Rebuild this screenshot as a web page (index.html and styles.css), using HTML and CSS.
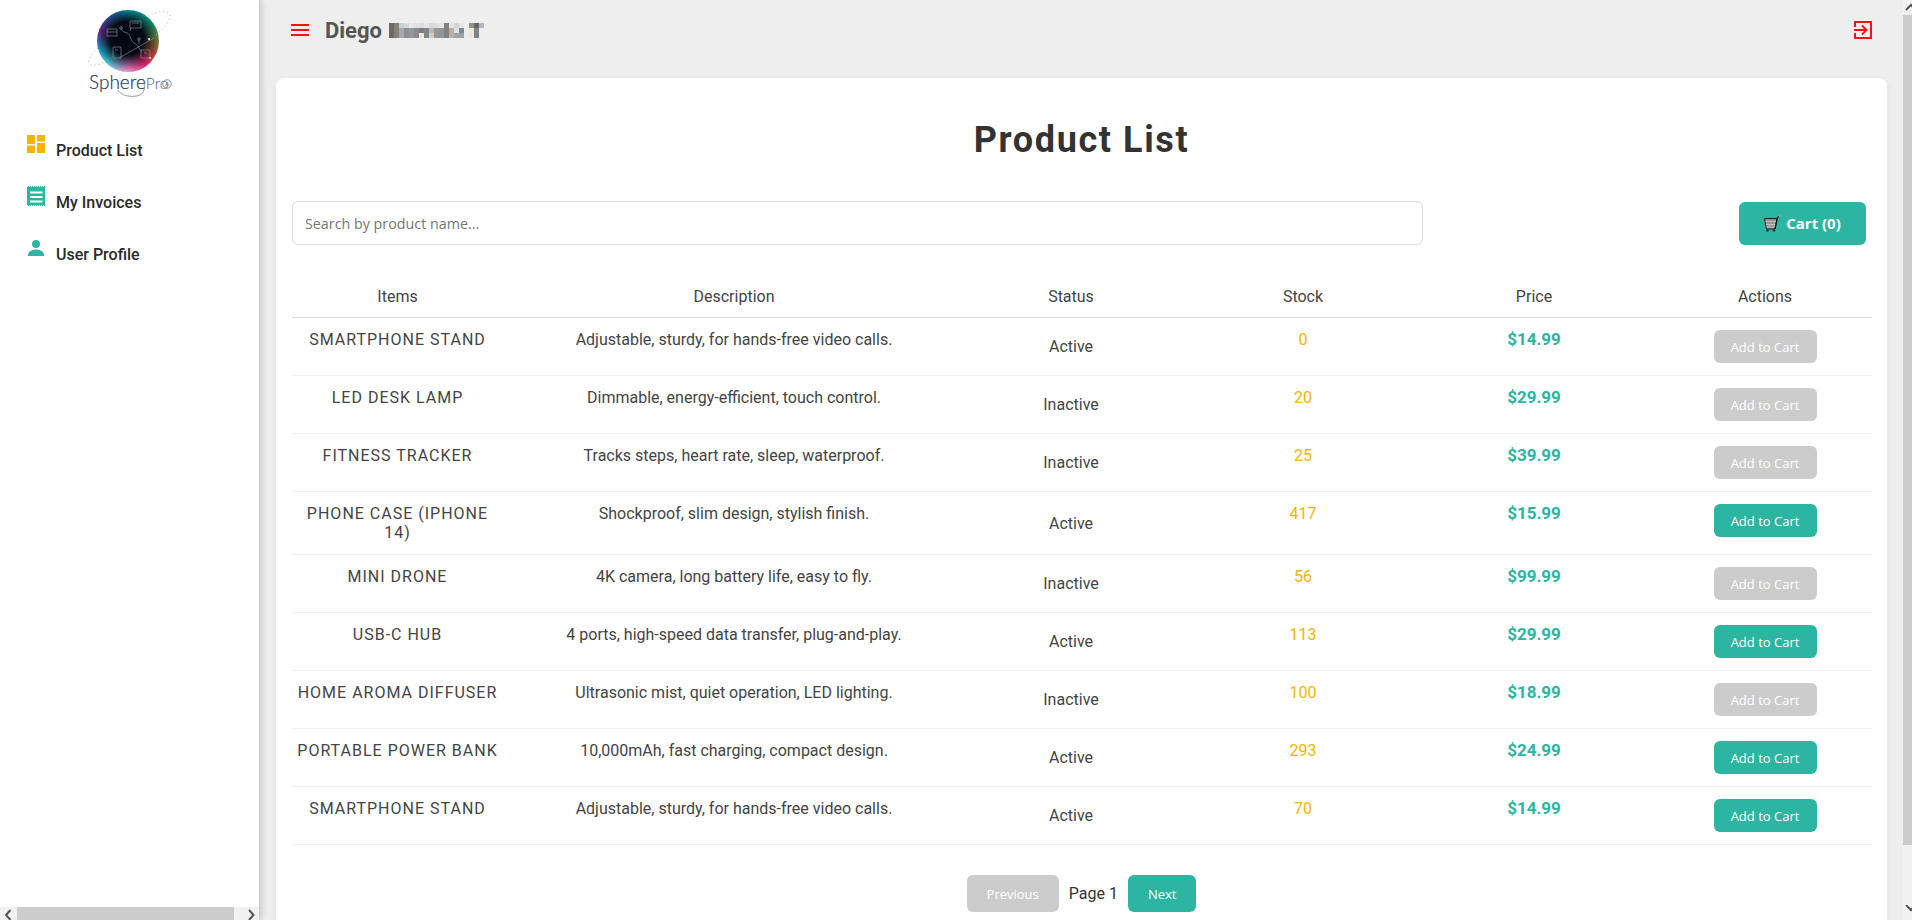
FILE: index.html
```html
<!DOCTYPE html>
<html lang="en">

<head>
  <meta charset="UTF-8">
  <meta name="viewport" content="width=device-width, initial-scale=1.0">
  <title>SpherePro - Product List</title>
  <link rel="stylesheet" href="styles.css">
</head>

<body>

  <div class="app">
    <aside class="sidebar">
      <div class="sidebar-content">
        <svg class="logo" width="120" height="105" viewBox="0 0 120 105">
          <foreignObject x="27" y="10" width="62" height="62">
            <div class="logo-orb"></div>
          </foreignObject>
          <g fill="none" stroke="#8d9aa8" stroke-width="0.6">
            <path d="M37 29h10v7H37zM37 32h10M60 21h11v7H60zM62 23h7M43 47h8v11h-8zM45 50h3" />
            <path d="M51 28.500c2 5 6 3 8 6s1 6 6 9 3 6 7 8M69 39v5M49 58l35-20M61 28l-1 3" />
            <path d="M71 50h9v8h-9zM74 53h3" />
            <circle cx="51" cy="28" r="1.300" />
            <circle cx="69" cy="39" r="1.300" />
          </g>
          <circle cx="79" cy="39" r="1" fill="#fff" />
          <circle cx="80" cy="58" r="1" fill="#ddd" />
          <g fill="none" stroke="#b0b0b0" stroke-width="1" stroke-dasharray="1 3">
            <path d="M78 16c8-5 20-6 22-1 1 5-6 13-14 20" />
            <path d="M28 48c-7 6-11 13-8 16s11 0 16-3" />
          </g>
          <text class="logo-text" x="19" y="89">Sphere<tspan class="logo-pro">Pro</tspan></text>
          <circle cx="97" cy="84" r="4.200" fill="none" stroke="#5e7184" stroke-width="0.8" />
          <text class="logo-mark" x="97" y="86">A</text>
          <path d="M48 90c4 8 24 9 26 0 1-3 0-6 0-8" fill="none" stroke="#6f8090" stroke-width="0.8" />
        </svg>

        <nav class="menu">
          <a class="menu-item" href="#">
            <svg class="menu-icon" width="18" height="18" viewBox="0 0 18 18">
              <path fill="#f5b400" d="M0 0h8v9H0zM0 10.500h8V18H0zM10 0h8v6.500h-8zM10 8h8v10h-8z" />
            </svg>
            <span class="menu-label">Product List</span>
          </a>
          <a class="menu-item" href="#">
            <svg class="menu-icon menu-icon-invoice" width="18" height="20" viewBox="0 0 18 20">
              <path fill="#2cb5a0" d="M0 0h18v20H0z" />
              <path fill="#fff" d="M3 5.500h12.500v2H3zM3 10h12.500v2H3zM3 14.500h12.500v2H3z" />
              <path stroke="#fff" stroke-width="1" stroke-dasharray="1 1" d="M0 .5h18M0 19.500h18" />
            </svg>
            <span class="menu-label">My Invoices</span>
          </a>
          <a class="menu-item" href="#">
            <svg class="menu-icon menu-icon-user" width="18" height="16" viewBox="0 0 18 16">
              <circle cx="9" cy="4" r="4" fill="#2cb5a0" />
              <path fill="#2cb5a0" d="M1 16c0-1 0-2 .5-3 1-2 4-3.500 7.500-3.500s6.500 1.500 7.500 3.500c.5 1 .5 2 .5 3z" />
            </svg>
            <span class="menu-label">User Profile</span>
          </a>
        </nav>
      </div>

      <div class="hbar">
        <svg width="17" height="13" viewBox="0 0 17 13">
          <path d="M10.500 3L6 8l4.500 5" fill="none" stroke="#555" stroke-width="2" />
        </svg>
        <div class="hbar-thumb"></div>
        <svg width="25" height="13" viewBox="0 0 25 13">
          <path d="M15 3l4.500 5-4.500 5" fill="none" stroke="#555" stroke-width="2" />
        </svg>
      </div>
    </aside>

    <main class="main">
      <header class="topbar">
        <div class="topbar-left">
          <svg class="hamburger" width="18" height="12" viewBox="0 0 18 12">
            <path fill="#f01414" d="M0 0h18v2H0zM0 5h18v2H0zM0 10h18v2H0z" />
          </svg>
          <span class="user-name">Diego</span>
          <!-- blurred surname -->
          <svg class="mosaic" width="95" height="15" viewBox="0 0 19 3" shape-rendering="crispEdges">
            <rect x="0" y="0" width="1" height="3" fill="#6d6863" />
            <rect x="1" y="0" width="1" height="3" fill="#85817c" />
            <rect x="2" y="0" width="1" height="1" fill="#c9ced2" />
            <rect x="3" y="0" width="1" height="1" fill="#d6d8da" />
            <rect x="4" y="0" width="1" height="1" fill="#e6e6e6" />
            <rect x="5" y="0" width="1" height="1" fill="#e2e2e2" />
            <rect x="6" y="0" width="1" height="1" fill="#dcdcdc" />
            <rect x="7" y="0" width="1" height="1" fill="#e4e4e4" />
            <rect x="8" y="0" width="1" height="1" fill="#d8d8d4" />
            <rect x="9" y="0" width="1" height="1" fill="#dcdcdc" />
            <rect x="10" y="0" width="1" height="1" fill="#e6e6e6" />
            <rect x="11" y="0" width="1" height="3" fill="#85817c" />
            <rect x="12" y="0" width="1" height="1" fill="#e0e2e4" />
            <rect x="13" y="0" width="1" height="1" fill="#d2d4d6" />
            <rect x="14" y="0" width="1" height="1" fill="#e4e6e8" />
            <rect x="2" y="1" width="1" height="2" fill="#a8a9a8" />
            <rect x="3" y="1" width="1" height="2" fill="#8a9094" />
            <rect x="4" y="1" width="1" height="2" fill="#93979b" />
            <rect x="5" y="1" width="1" height="2" fill="#8d8b88" />
            <rect x="6" y="1" width="1" height="1" fill="#7c7c7c" />
            <rect x="6" y="2" width="1" height="1" fill="#efe6dc" />
            <rect x="7" y="1" width="1" height="2" fill="#7e8790" />
            <rect x="8" y="1" width="1" height="1" fill="#bdb5ad" />
            <rect x="8" y="2" width="1" height="1" fill="#d4ccc4" />
            <rect x="9" y="1" width="1" height="2" fill="#979898" />
            <rect x="10" y="1" width="1" height="2" fill="#8f959d" />
            <rect x="12" y="1" width="1" height="2" fill="#b6aea7" />
            <rect x="13" y="1" width="1" height="1" fill="#e0e2e4" />
            <rect x="13" y="2" width="1" height="1" fill="#a0a4a8" />
            <rect x="14" y="1" width="1" height="1" fill="#808890" />
            <rect x="14" y="2" width="1" height="1" fill="#9ca2a8" />
            <rect x="16" y="0" width="1" height="1" fill="#9a908a" />
            <rect x="17" y="0" width="1" height="1" fill="#62666c" />
            <rect x="18" y="0" width="1" height="1" fill="#b4b8bc" />
            <rect x="16" y="1" width="1" height="2" fill="#f1e5db" />
            <rect x="17" y="1" width="1" height="2" fill="#7c848c" />
          </svg>
        </div>
        <svg class="logout" width="18" height="18" viewBox="0 0 18 18">
          <path fill="none" stroke="#f01414" stroke-width="2" d="M1 6V1h16v16H1v-5" />
          <path fill="none" stroke="#f01414" stroke-width="2" d="M0 9h12M8 4.500L12.500 9 8 13.500" />
        </svg>
      </header>

      <section class="card">
        <h1 class="page-title">Product List</h1>

        <div class="toolbar">
          <input class="search" type="text" placeholder="Search by product name...">
          <button class="cart-btn">
            <svg width="17" height="17" viewBox="0 0 17 17">
              <path fill="#949494" stroke="#1c1c1c" stroke-width="1" d="M.5 3.500H13l-2 10.500H2.500z" />
              <path fill="none" stroke="#c4c4c4" stroke-width="1" d="M1.500 6.500h10.500M2 9.500h9.500M2.500 12h8.500" />
              <path fill="none" stroke="#1c1c1c" stroke-width="1.200" d="M11 14l2.500-11.500 1.500-1" />
              <path fill="none" stroke="#e58a80" stroke-width="1.200" d="M15 1.500L16.500.5" />
              <circle cx="3.500" cy="15.500" r="1.300" fill="#333" />
              <circle cx="10" cy="15.500" r="1.300" fill="#333" />
            </svg>
            Cart (0)
          </button>
        </div>

        <table class="products">
          <colgroup>
            <col class="col-items">
            <col class="col-desc">
            <col class="col-status">
            <col class="col-stock">
            <col class="col-price">
            <col class="col-actions">
          </colgroup>
          <thead>
            <tr>
              <th>Items</th>
              <th>Description</th>
              <th>Status</th>
              <th>Stock</th>
              <th>Price</th>
              <th>Actions</th>
            </tr>
          </thead>
          <tbody>
            <tr>
              <td class="name">Smartphone Stand</td>
              <td>Adjustable, sturdy, for hands-free video calls.</td>
              <td class="status">Active</td>
              <td class="stock">0</td>
              <td class="price">$14.99</td>
              <td><button class="btn" disabled>Add to Cart</button></td>
            </tr>
            <tr>
              <td class="name">LED Desk Lamp</td>
              <td>Dimmable, energy-efficient, touch control.</td>
              <td class="status">Inactive</td>
              <td class="stock">20</td>
              <td class="price">$29.99</td>
              <td><button class="btn" disabled>Add to Cart</button></td>
            </tr>
            <tr>
              <td class="name">Fitness Tracker</td>
              <td>Tracks steps, heart rate, sleep, waterproof.</td>
              <td class="status">Inactive</td>
              <td class="stock">25</td>
              <td class="price">$39.99</td>
              <td><button class="btn" disabled>Add to Cart</button></td>
            </tr>
            <tr>
              <td class="name">Phone Case (iPhone 14)</td>
              <td>Shockproof, slim design, stylish finish.</td>
              <td class="status">Active</td>
              <td class="stock">417</td>
              <td class="price">$15.99</td>
              <td><button class="btn">Add to Cart</button></td>
            </tr>
            <tr>
              <td class="name">Mini Drone</td>
              <td>4K camera, long battery life, easy to fly.</td>
              <td class="status">Inactive</td>
              <td class="stock">56</td>
              <td class="price">$99.99</td>
              <td><button class="btn" disabled>Add to Cart</button></td>
            </tr>
            <tr>
              <td class="name">USB-C Hub</td>
              <td>4 ports, high-speed data transfer, plug-and-play.</td>
              <td class="status">Active</td>
              <td class="stock">113</td>
              <td class="price">$29.99</td>
              <td><button class="btn">Add to Cart</button></td>
            </tr>
            <tr>
              <td class="name">Home Aroma Diffuser</td>
              <td>Ultrasonic mist, quiet operation, LED lighting.</td>
              <td class="status">Inactive</td>
              <td class="stock">100</td>
              <td class="price">$18.99</td>
              <td><button class="btn" disabled>Add to Cart</button></td>
            </tr>
            <tr>
              <td class="name">Portable Power Bank</td>
              <td>10,000mAh, fast charging, compact design.</td>
              <td class="status">Active</td>
              <td class="stock">293</td>
              <td class="price">$24.99</td>
              <td><button class="btn">Add to Cart</button></td>
            </tr>
            <tr>
              <td class="name">Smartphone Stand</td>
              <td>Adjustable, sturdy, for hands-free video calls.</td>
              <td class="status">Active</td>
              <td class="stock">70</td>
              <td class="price">$14.99</td>
              <td><button class="btn">Add to Cart</button></td>
            </tr>
          </tbody>
        </table>

        <div class="pagination">
          <button class="btn page-btn" disabled>Previous</button>
          <span class="page-label">Page 1</span>
          <button class="btn page-btn">Next</button>
        </div>
      </section>
    </main>

    <div class="vbar">
      <svg class="vbar-arrow" width="9" height="15" viewBox="0 0 9 15">
        <path d="M3 10l5-5 5 5" fill="none" stroke="#555" stroke-width="2" />
      </svg>
      <div class="vbar-thumb"></div>
      <svg class="vbar-arrow vbar-arrow-end" width="9" height="15" viewBox="0 0 9 15">
        <path d="M3 0l5 5 5-5" fill="none" stroke="#555" stroke-width="2" />
      </svg>
    </div>
  </div>

</body>

</html>
```

FILE: styles.css
```css
* {
  box-sizing: border-box;
}

body {
  font-family: Roboto, sans-serif;
  margin: 0;
  background-color: #eee;
  color: #444;
  overflow: hidden;
}

.app {
  display: flex;
  height: 920px;
}

/* Sidebar */
.sidebar {
  flex: 0 0 260px;
  display: flex;
  flex-direction: column;
  background-color: #fff;
  border-right: 1px solid #ccc;
  box-shadow: 2px 0 6px rgba(0, 0, 0, 0.15);
  z-index: 1;
}

.sidebar-content {
  flex: 1;
}

.logo {
  display: block;
  margin-left: 70px;
}

.logo-orb {
  width: 62px;
  height: 62px;
  border-radius: 50%;
  background:
    radial-gradient(circle at 48% 46%, #04070f 0, #060a14 36%, rgba(6, 10, 20, 0) 70%),
    conic-gradient(#0ab0c0 0deg, #0fa57c 50deg, #6f8a3a 85deg, #c0452f 115deg, #e0246e 145deg, #f58ccc 180deg, #4ad6f0 225deg, #23b4e4 255deg, #8a30b0 290deg, #2a6cc5 325deg, #0ab0c0 360deg);
}

.logo-text {
  font-family: Lato, sans-serif;
  font-size: 19px;
  font-weight: 300;
  fill: #24405a;
  stroke: #24405a;
  stroke-width: 0.2;
}

.logo-pro {
  font-size: 15.500px;
  fill: #4d6176;
  stroke: none;
}

.logo-mark {
  font-family: Lato, sans-serif;
  font-size: 6px;
  fill: #5e7184;
  text-anchor: middle;
}

.menu {
  margin-top: 30px;
  display: flex;
  flex-direction: column;
}

.menu-item {
  display: flex;
  align-items: flex-start;
  height: 52px;
  padding-left: 27px;
  font-size: 16px;
  font-weight: 500;
  line-height: 19px;
  color: #2a2a2a;
  text-decoration: none;
}

.menu-icon {
  flex: none;
  margin-right: 11px;
}

.menu-icon-invoice {
  margin-top: -1px;
}

.menu-icon-user {
  margin-top: 1px;
}

.menu-label {
  margin-top: 6px;
}

.hbar {
  flex: 0 0 13px;
  display: flex;
  background-color: #f1f1f1;
  overflow: hidden;
}

.hbar-thumb {
  width: 217px;
  background-color: #ccc;
}

/* Main area */
.main {
  flex: 1;
  min-width: 0;
  overflow: hidden;
  padding: 0 16px;
}

.topbar {
  height: 78px;
  display: flex;
  justify-content: space-between;
  padding: 21px 15px 0;
}

.topbar-left {
  display: flex;
  align-items: flex-start;
}

.hamburger {
  margin-top: 3px;
}

.user-name {
  margin-left: 16px;
  font-size: 22px;
  font-weight: 700;
  line-height: 20px;
  color: #555;
}

.mosaic {
  margin: 2px 0 0 7px;
}

.card {
  background-color: #fff;
  border-radius: 8px;
  box-shadow: 0 2px 8px rgba(0, 0, 0, 0.05);
  padding: 37px 16px 40px;
}

.page-title {
  margin: 0;
  text-align: center;
  font-size: 36px;
  font-weight: 700;
  line-height: 50px;
  letter-spacing: 1.600px;
  color: #333;
}

.toolbar {
  display: flex;
  justify-content: space-between;
  align-items: center;
  margin-top: 36px;
  padding-right: 5px;
}

.search {
  width: 1131px;
  height: 44px;
  padding: 0 12px;
  border: 1px solid #ddd;
  border-radius: 6px;
  font-family: "Open Sans", sans-serif;
  font-size: 14.300px;
}

.search::placeholder {
  color: #757575;
}

.cart-btn {
  display: flex;
  align-items: center;
  justify-content: center;
  gap: 5px;
  width: 127px;
  height: 43px;
  border: none;
  border-radius: 6px;
  background-color: #2cb5a0;
  color: #fff;
  font-family: "Open Sans", sans-serif;
  font-size: 15px;
  font-weight: 700;
}

/* Table */
.products {
  width: 1580px;
  margin-top: 42px;
  border-collapse: collapse;
  table-layout: fixed;
  font-size: 16px;
  line-height: 19px;
}

.col-items {
  width: 211px;
}

.col-desc {
  width: 462px;
}

.col-status {
  width: 212px;
}

.col-stock {
  width: 250px;
}

.col-price {
  width: 231px;
}

.col-actions {
  width: 214px;
}

th {
  font-weight: 400;
  padding: 0 12px 11px;
  border-bottom: 1px solid #ddd;
}

td {
  padding: 12px;
  text-align: center;
  vertical-align: top;
  border-bottom: 1px solid #f1f1f1;
}

th:nth-child(4),
td:nth-child(4) {
  padding-left: 14px;
}

th:nth-child(5),
td:nth-child(5) {
  padding-right: 29px;
}

td.name {
  padding-left: 4px;
  padding-right: 4px;
  letter-spacing: 1px;
  text-transform: uppercase;
}

td.status {
  vertical-align: middle;
}

.stock {
  color: #f5b400;
}

.price {
  font-size: 17px;
  font-weight: 700;
  color: #2cb5a0;
}

.btn {
  display: block;
  height: 33px;
  width: 103px;
  margin: 0 auto;
  padding: 0;
  border: none;
  border-radius: 6px;
  background-color: #2cb5a0;
  color: #fff;
  font-family: "Open Sans", sans-serif;
  font-size: 13px;
}

.btn:disabled {
  background-color: #ccc;
}

.pagination {
  display: flex;
  justify-content: center;
  align-items: center;
  gap: 10px;
  margin-top: 30px;
}

.page-btn {
  width: auto;
  height: 37px;
  margin: 0;
  padding: 0 20px;
}

.page-label {
  font-size: 16px;
  color: #333;
}

/* Page scrollbar */
.vbar {
  flex: 0 0 9px;
  display: flex;
  flex-direction: column;
  background-color: #f1f1f1;
  overflow: hidden;
}

.vbar-arrow {
  flex: none;
}

.vbar-thumb {
  height: 830px;
  background-color: #ccc;
}

.vbar-arrow-end {
  margin-top: auto;
}
```
